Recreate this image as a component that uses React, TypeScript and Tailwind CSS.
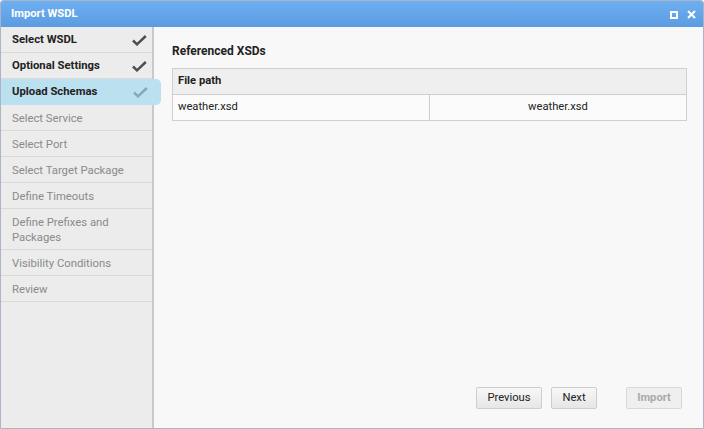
import React from "react";

const Check = ({ className }: { className?: string }) => (
  <svg width="15" height="11" viewBox="0 0 15 11" className={className}>
    <path d="M1 5.5 L5 9.3 L13.8 1" fill="none" stroke="currentColor" strokeWidth="2.5" />
  </svg>
);

const done = ["Select WSDL", "Optional Settings"];
const pending = [
  "Select Service",
  "Select Port",
  "Select Target Package",
  "Define Timeouts",
  "Define Prefixes and Packages",
  "Visibility Conditions",
  "Review",
];

export default function App() {
  return (
    <div
      className="w-[704px] h-[429px] flex flex-col border border-[#aab4c6] rounded-t-[3px] overflow-hidden bg-[#f8f8f8]"
      style={{ fontFamily: "Roboto, 'Liberation Sans', sans-serif" }}
    >
      {/* title bar */}
      <div className="h-[26px] shrink-0 flex items-center justify-between pl-[10px] pr-[7px] pt-[1px] bg-gradient-to-b from-[#6db0f2] to-[#5c9be0] text-white">
        <span className="text-[11.2px] font-bold">Import WSDL</span>
        <div className="flex items-center gap-[9px]">
          <div className="w-[8px] h-[8px] border-2 border-white" />
          <svg width="9" height="9" viewBox="0 0 9 9">
            <path d="M1 1 L8 8 M8 1 L1 8" stroke="white" strokeWidth="2" />
          </svg>
        </div>
      </div>

      <div className="flex flex-1 min-h-0">
        {/* sidebar */}
        <div className="w-[153px] shrink-0 bg-[#ececec] border-r-2 border-[#c9c9c9] flex flex-col">
          {done.map((s) => (
            <div
              key={s}
              className="h-[26px] shrink-0 flex items-center justify-between pl-[11px] pr-[5px] pt-[1px] border-b border-[#dadada] text-[11.3px] font-bold text-[#222]"
            >
              <span>{s}</span>
              <Check className="text-[#4f4f4f]" />
            </div>
          ))}
          <div className="h-[26px] shrink-0 w-[160px] flex items-center justify-between pl-[11px] pr-[13px] pt-[1px] bg-[#bbe1f1] rounded-r-[5px] text-[11.3px] font-bold text-[#222] relative z-10">
            <span>Upload Schemas</span>
            <Check className="text-[#86a9b8]" />
          </div>
          {pending.map((s) => (
            <div
              key={s}
              className="min-h-[26px] flex items-center pl-[11px] pr-[20px] pt-[6px] pb-[4px] border-b border-[#dadada] text-[11.3px] leading-[15px] text-[#8a8a8a]"
            >
              {s}
            </div>
          ))}
        </div>

        {/* content */}
        <div className="flex-1 flex flex-col pl-[18px] pr-[16px] pt-[15px] pb-[19px]">
          <h2 className="text-[12px] font-bold text-[#222] mb-[8px]">Referenced XSDs</h2>
          <div className="border border-[#cfcfcf] text-[11.2px] text-[#222]">
            <div className="h-[26px] flex items-center px-[5px] bg-[#efefef] border-b border-[#cfcfcf] font-bold">
              File path
            </div>
            <div className="h-[25px] flex bg-[#fbfbfb]">
              <div className="w-[257px] flex items-center px-[5px] border-r border-[#cfcfcf]">weather.xsd</div>
              <div className="flex-1 flex items-center justify-center">weather.xsd</div>
            </div>
          </div>
          <div className="mt-auto flex justify-end items-center text-[11.2px] pr-[5px]">
            <button className="h-[22px] w-[66px] border border-[#cdcdcd] rounded-[2px] bg-gradient-to-b from-[#f7f7f7] to-[#e6e6e6] text-[#222]">
              Previous
            </button>
            <button className="h-[22px] w-[46px] ml-[9px] border border-[#cdcdcd] rounded-[2px] bg-gradient-to-b from-[#f7f7f7] to-[#e6e6e6] text-[#222]">
              Next
            </button>
            <button className="h-[22px] w-[56px] ml-[29px] border border-[#d8d8d8] rounded-[2px] bg-[#efefef] text-[#aaa] font-bold">
              Import
            </button>
          </div>
        </div>
      </div>
    </div>
  );
}
